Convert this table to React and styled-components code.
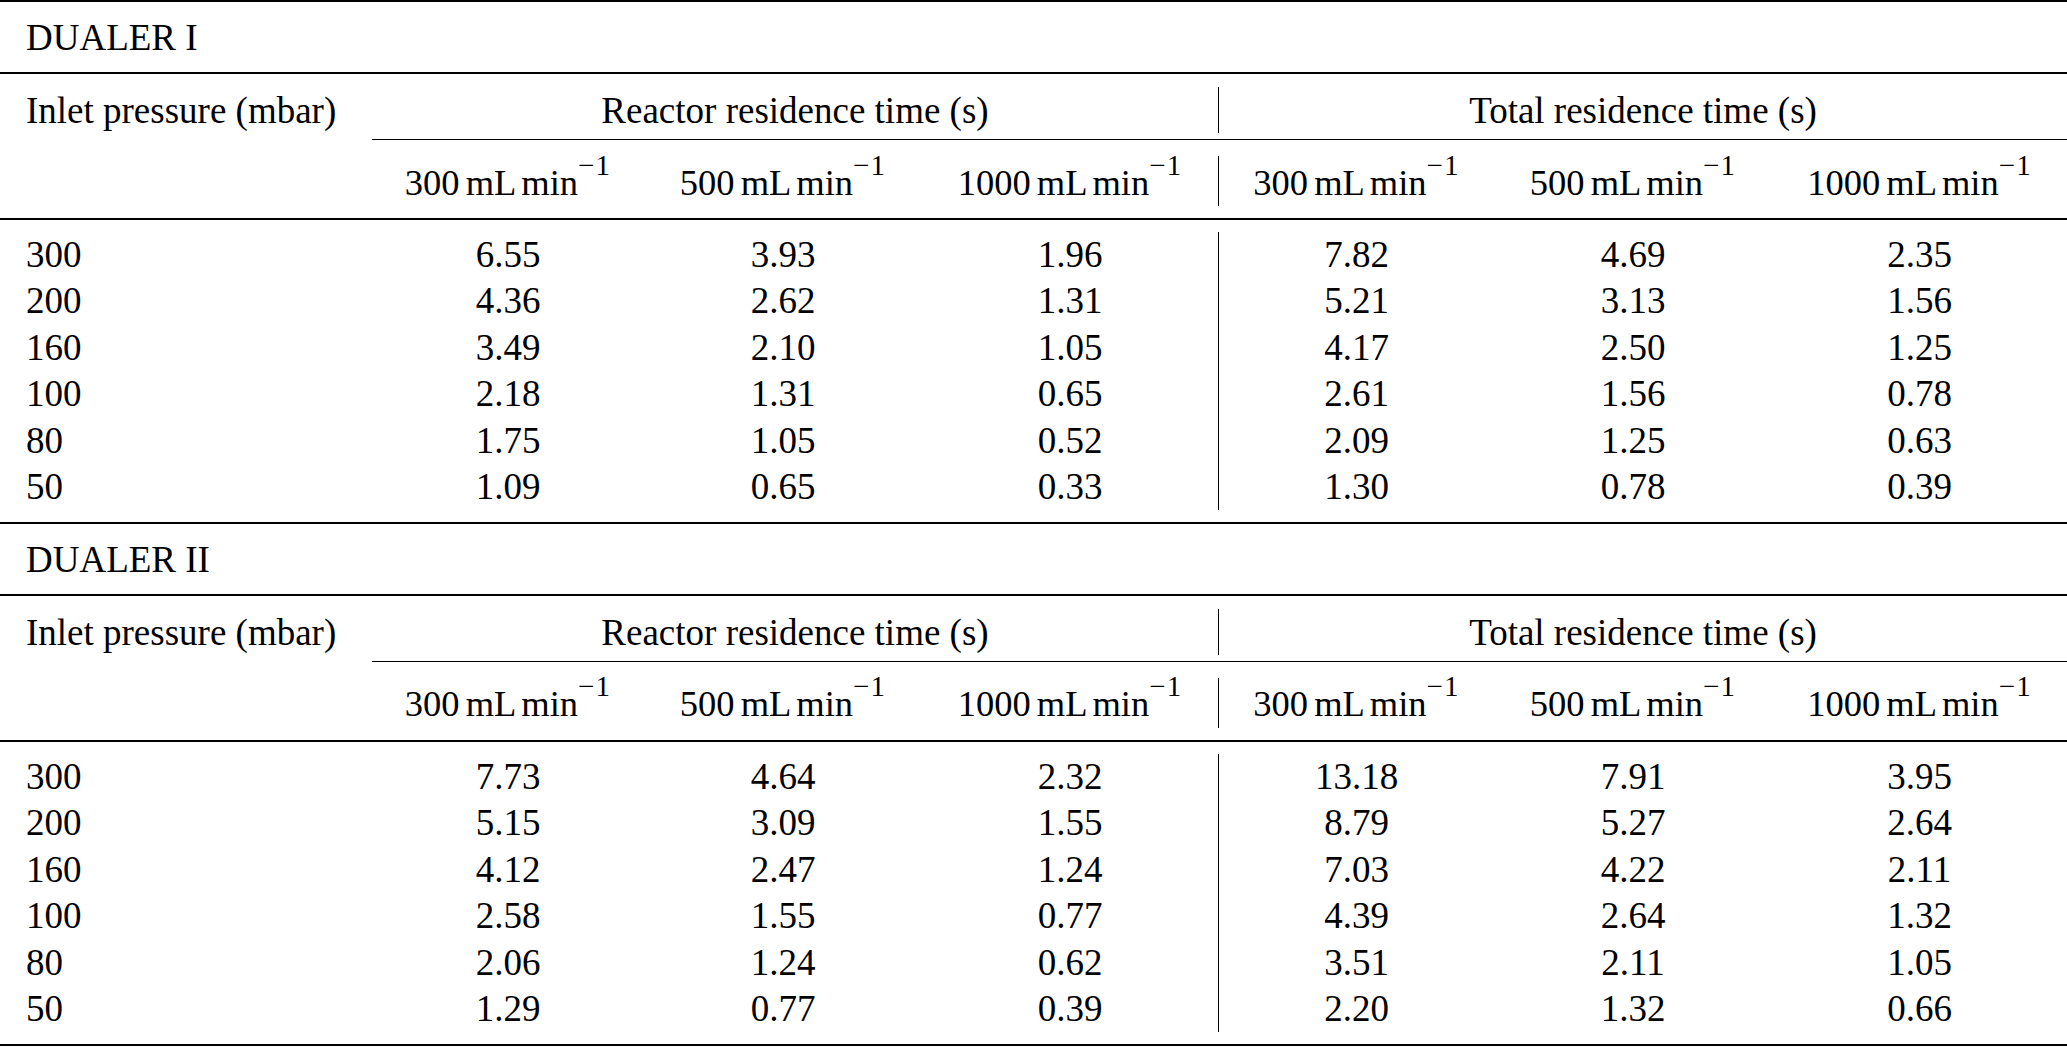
import styled, { createGlobalStyle } from "styled-components"

const GlobalStyle = createGlobalStyle`
  html, body {
    margin: 0;
    padding: 0;
    background: #fff;
    overflow: hidden;
  }
`

const COLS = "372px 272px 278px 296px 276px 278px 1fr"

const sections = [
  {
    title: "DUALER I",
    rows: [
      ["300", "6.55", "3.93", "1.96", "7.82", "4.69", "2.35"],
      ["200", "4.36", "2.62", "1.31", "5.21", "3.13", "1.56"],
      ["160", "3.49", "2.10", "1.05", "4.17", "2.50", "1.25"],
      ["100", "2.18", "1.31", "0.65", "2.61", "1.56", "0.78"],
      ["80", "1.75", "1.05", "0.52", "2.09", "1.25", "0.63"],
      ["50", "1.09", "0.65", "0.33", "1.30", "0.78", "0.39"],
    ],
  },
  {
    title: "DUALER II",
    rows: [
      ["300", "7.73", "4.64", "2.32", "13.18", "7.91", "3.95"],
      ["200", "5.15", "3.09", "1.55", "8.79", "5.27", "2.64"],
      ["160", "4.12", "2.47", "1.24", "7.03", "4.22", "2.11"],
      ["100", "2.58", "1.55", "0.77", "4.39", "2.64", "1.32"],
      ["80", "2.06", "1.24", "0.62", "3.51", "2.11", "1.05"],
      ["50", "1.29", "0.77", "0.39", "2.20", "1.32", "0.66"],
    ],
  },
]

const flows = ["300", "500", "1000"]

export default function App() {
  return (
    <>
      <GlobalStyle />
      <Page>
        {sections.map((s, i) => (
          <Block key={s.title}>
            <Rule />
            <Title>{s.title}</Title>
            <Rule />
            <HeadBand>
              <HeadFirst>
                <HeadText>Inlet pressure (mbar)</HeadText>
              </HeadFirst>
              <Group>
                <HeadText $center>Reactor residence time (s)</HeadText>
              </Group>
              <Group>
                <HeadText $center $split>Total residence time (s)</HeadText>
              </Group>
            </HeadBand>
            <UnitBand>
              <UnitCell />
              {[0, 1].map((g) =>
                flows.map((f, k) => (
                  <UnitCell key={g + f}>
                    <UnitText $split={g === 1 && k === 0}>
                      {f} mL min<Sup>−1</Sup>
                    </UnitText>
                  </UnitCell>
                ))
              )}
            </UnitBand>
            <Rule />
            <DataBand>
              {s.rows.map((r) =>
                r.map((v, c) => (
                  <DataCell key={r[0] + c} $first={c === 0} $split={c === 4}>
                    {v}
                  </DataCell>
                ))
              )}
            </DataBand>
            {i === sections.length - 1 && <Rule />}
          </Block>
        ))}
      </Page>
    </>
  )
}

const Page = styled.div`
  width: 2067px;
  font-family: "Liberation Serif", "Times New Roman", serif;
  font-size: 37px;
  color: #000;
  background: #fff;
`

const Block = styled.section`
  display: flex;
  flex-direction: column;
`

const Rule = styled.div`
  height: 2px;
  background: #000;
`

const Title = styled.div`
  height: 70px;
  box-sizing: border-box;
  padding: 2px 0 0 26px;
  line-height: 68px;
  white-space: nowrap;
`

const HeadBand = styled.div`
  display: grid;
  grid-template-columns: ${COLS};
`

const HeadFirst = styled.div`
  padding: 13px 0 7px 26px;
`

const Group = styled.div`
  grid-column: span 3;
  padding: 13px 0 6px;
  border-bottom: 1px solid #000;
`

const HeadText = styled.div`
  height: 46px;
  box-sizing: border-box;
  padding-top: 1px;
  line-height: 45px;
  white-space: nowrap;
  text-align: ${(p) => (p.$center ? "center" : "left")};
  border-left: ${(p) => (p.$split ? "1px solid #000" : "none")};
`

const UnitBand = styled.div`
  display: grid;
  grid-template-columns: ${COLS};
`

const UnitCell = styled.div`
  padding: 16px 0 12px;
`

const UnitText = styled.div`
  height: 50px;
  box-sizing: border-box;
  padding-top: 2.5px;
  line-height: 47.5px;
  font-size: 36.5px;
  word-spacing: -0.08em;
  text-align: center;
  white-space: nowrap;
  border-left: ${(p) => (p.$split ? "1px solid #000" : "none")};
`

const Sup = styled.span`
  font-size: 29px;
  line-height: 0;
  vertical-align: 0.7em;
  margin-left: 0;
  letter-spacing: 0.04em;
`

const DataBand = styled.div`
  display: grid;
  grid-template-columns: ${COLS};
  grid-auto-rows: 46.4px;
  padding: 12px 0 11.6px;
`

const DataCell = styled.div`
  box-sizing: border-box;
  padding: 2px 0 3px ${(p) => (p.$first ? "26px" : "0")};
  line-height: 41.4px;
  text-align: ${(p) => (p.$first ? "left" : "center")};
  border-left: ${(p) => (p.$split ? "1px solid #000" : "none")};
`
